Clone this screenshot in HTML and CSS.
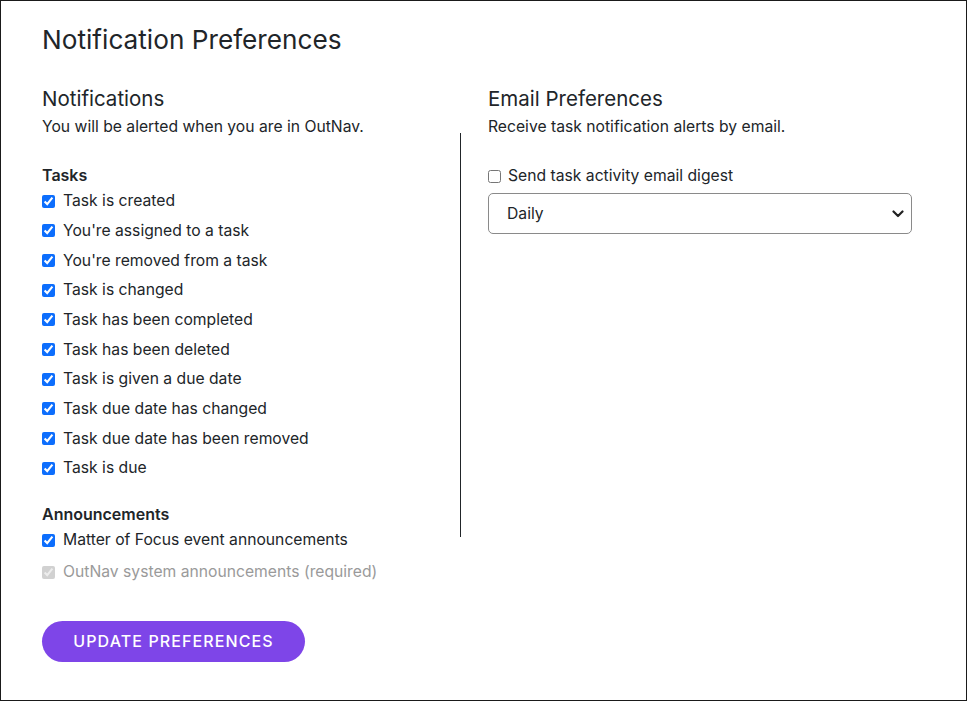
FILE: index.html
```html
<!DOCTYPE html>
<html lang="en">
<head>
<meta charset="utf-8">
<title>Notification Preferences</title>
<link rel="stylesheet" href="styles.css">
</head>
<body>
<div class="frame">
  <h1 class="title">Notification Preferences</h1>
  <div class="columns">
    <section class="col col-left">
      <h2 class="section-title">Notifications</h2>
      <p class="section-sub">You will be alerted when you are in OutNav.</p>
      <h3 class="group-title">Tasks</h3>
      <ul class="checks">
        <li><label><input type="checkbox" checked><span>Task is created</span></label></li>
        <li><label><input type="checkbox" checked><span>You're assigned to a task</span></label></li>
        <li><label><input type="checkbox" checked><span>You're removed from a task</span></label></li>
        <li><label><input type="checkbox" checked><span>Task is changed</span></label></li>
        <li><label><input type="checkbox" checked><span>Task has been completed</span></label></li>
        <li><label><input type="checkbox" checked><span>Task has been deleted</span></label></li>
        <li><label><input type="checkbox" checked><span>Task is given a due date</span></label></li>
        <li><label><input type="checkbox" checked><span>Task due date has changed</span></label></li>
        <li><label><input type="checkbox" checked><span>Task due date has been removed</span></label></li>
        <li><label><input type="checkbox" checked><span>Task is due</span></label></li>
      </ul>
      <h3 class="group-title group-title-2">Announcements</h3>
      <ul class="checks">
        <li><label><input type="checkbox" checked><span>Matter of Focus event announcements</span></label></li>
        <li class="disabled"><label><input type="checkbox" checked disabled><span>OutNav system announcements (required)</span></label></li>
      </ul>
    </section>
    <div class="divider"></div>
    <section class="col col-right">
      <h2 class="section-title">Email Preferences</h2>
      <p class="section-sub">Receive task notification alerts by email.</p>
      <label class="digest"><input type="checkbox"><span>Send task activity email digest</span></label>
      <div class="select-wrap">
        <select class="select">
          <option>Daily</option>
          <option>Weekly</option>
        </select>
        <svg class="chev" width="12" height="8" viewBox="0 0 12 8"><path d="M1.5 1.5 L6 6 L10.5 1.5" fill="none" stroke="#222" stroke-width="2.2" stroke-linecap="round" stroke-linejoin="round"/></svg>
      </div>
    </section>
  </div>
  <button class="btn" type="button">UPDATE PREFERENCES</button>
</div>
</body>
</html>
```

FILE: styles.css
```css
* { box-sizing: border-box; }
html, body { margin: 0; padding: 0; background: #fff; }
body {
  font-family: Inter, "Noto Sans", sans-serif;
  color: #212529;
}
.frame {
  width: 967px;
  height: 701px;
  border: 1px solid #1a1a1a;
  padding: 22px 41px 0 41px;
  overflow: hidden;
}
.title {
  margin: 0;
  font-size: 26.2px;
  font-weight: 400;
  line-height: 34px;
  color: #212529;
}
.columns {
  display: flex;
  margin-top: 28px;
}
.col-left { width: 418px; }
.divider {
  width: 1px;
  background: #212529;
  margin-top: 48px;
  height: 404px;
}
.col-right {
  padding-left: 27px;
  width: 451px;
}
.section-title {
  margin: 0;
  font-size: 20.5px;
  font-weight: 400;
  line-height: 28px;
}
.section-sub {
  margin: 2px 0 0 0;
  font-size: 15.7px;
  line-height: 24px;
}
.group-title {
  margin: 26px 0 1.5px 0;
  font-size: 16px;
  font-weight: 600;
  line-height: 20px;
}
.group-title-2 { margin-top: 21px; }
.checks {
  list-style: none;
  margin: 0;
  padding: 0;
}
.checks li {
  height: 29.67px;
  display: flex;
  align-items: center;
}
.checks li.disabled { margin-top: 2px; }
.checks label, .digest {
  display: flex;
  align-items: center;
  font-size: 15.7px;
  line-height: 22px;
}
.checks input, .digest input {
  width: 13px;
  height: 13px;
  margin: 0 8px 0 0;
  accent-color: #0d6efd;
}
.digest input { margin-right: 7px; }
.disabled { color: #9a9a9a; }
.digest {
  margin-top: 25px;
  height: 24px;
}
.select-wrap {
  position: relative;
  margin-top: 5px;
  width: 424px;
}
.select {
  appearance: none;
  -webkit-appearance: none;
  display: block;
  width: 424px;
  height: 41px;
  border: 1px solid #8a8a8a;
  border-radius: 5px;
  background: #fff;
  font-family: Inter, "Noto Sans", sans-serif;
  font-size: 15.7px;
  color: #212529;
  padding: 0 18px;
}
.chev {
  position: absolute;
  right: 8px;
  top: 17px;
  pointer-events: none;
}
.btn {
  margin-top: 34px;
  width: 263px;
  height: 41px;
  border: none;
  border-radius: 21px;
  background: #7e45e8;
  color: #fff;
  font-family: Inter, "Noto Sans", sans-serif;
  font-size: 16px;
  font-weight: 500;
  letter-spacing: 1.1px;
  cursor: pointer;
}
```
